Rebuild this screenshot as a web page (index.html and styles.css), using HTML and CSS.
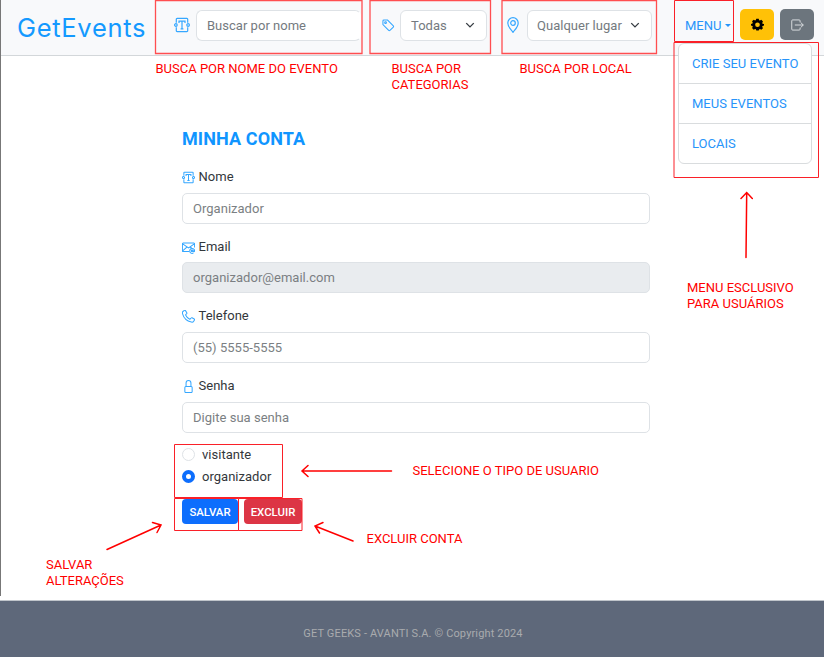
FILE: index.html
```html
<!DOCTYPE html>
<html lang="pt-BR">
<head>
<meta charset="utf-8">
<title>GetEvents - Minha conta</title>
<link rel="stylesheet" href="styles.css">
</head>
<body>
<svg class="defs" aria-hidden="true">
  <symbol id="i-name" viewBox="0 0 16 16">
    <path d="M2.3 5.8V2.2a.8.8 0 0 1 .8-.8h9.8a.8.8 0 0 1 .8.8v3.6M2.3 10.2v3.6a.8.8 0 0 0 .8.8h9.8a.8.8 0 0 0 .8-.8v-3.6M5 6V4.2h6V6M8 4.2v7.6M6.6 11.8h2.8"/>
    <circle cx="1.9" cy="8" r="1.3"/><circle cx="14.1" cy="8" r="1.3"/>
  </symbol>
  <symbol id="i-tag" viewBox="0 0 16 16">
    <path d="M2.2 3.4v4.2l6.6 6.6a1 1 0 0 0 1.4 0l3.9-3.9a1 1 0 0 0 0-1.4L7.5 2.3H3.3a1.1 1.1 0 0 0-1.1 1.1z"/><circle cx="5.2" cy="5.3" r="1"/>
  </symbol>
  <symbol id="i-pin" viewBox="0 0 16 16">
    <path d="M8 15.4C6 12.6 2.8 9.8 2.8 5.9a5.2 5.2 0 0 1 10.4 0C13.2 9.8 10 12.6 8 15.4z"/><circle cx="8" cy="6" r="2.3"/>
  </symbol>
  <symbol id="i-mail" viewBox="0 0 16 16">
    <path d="M9 13H1.4a.9.9 0 0 1-.9-.9V3.4a.9.9 0 0 1 .9-.9h13.2a.9.9 0 0 1 .9.9V8M.8 3.5 8 8.6l7.2-5.1M.8 12.3 6 7.5M10 7.4l2 1.500"/>
    <circle cx="12.5" cy="12.2" r="1.1"/><path d="M13.6 11v1.5c0 1.4 1.9 1 1.9-.5 0-3.8-6-3.8-6 .3 0 2.5 2.4 3.5 4.6 2.6"/>
  </symbol>
  <symbol id="i-phone" viewBox="0 0 16 16">
    <path d="M1.5 1.5 3 .5c.5-.3 1-.1 1.3.3l1.6 2.7c.3.5.1 1-.3 1.3l-.8.6c-.4.3-.4.7-.2 1.1.9 1.9 2.7 3.7 4.6 4.6.4.2.8.2 1.1-.2l.8-1c.3-.4.8-.5 1.3-.3l2.6 1.5c.5.3.6.9.3 1.3l-.9 1.4c-.6 1-1.7 1.4-2.9 1.1C6.3 13.7 2 9.4.6 4.4.3 3.2.6 2.1 1.5 1.5z"/>
  </symbol>
  <symbol id="i-lock" viewBox="0 0 16 16">
    <rect x="3.5" y="8" width="9" height="7.5" rx="1.3"/><path d="M5 8V3.7a3 3 0 0 1 6 0V8"/>
  </symbol>
  <symbol id="i-chev" viewBox="0 0 16 16"><path d="m2 5 6 6 6-6"/></symbol>
</svg>

<div class="page">
  <header class="navbar">
    <a class="brand">GetEvents</a>
    <div class="search search-name">
      <svg class="icon"><use href="#i-name"/></svg>
      <span class="control">Buscar por nome</span>
    </div>
    <div class="search search-cat">
      <svg class="icon small"><use href="#i-tag"/></svg>
      <span class="control">Todas<svg class="chev"><use href="#i-chev"/></svg></span>
    </div>
    <div class="search search-local">
      <svg class="icon"><use href="#i-pin"/></svg>
      <span class="control">Qualquer lugar<svg class="chev"><use href="#i-chev"/></svg></span>
    </div>
    <div class="dropdown">
      <a class="toggle">MENU<i class="caret"></i></a>
      <nav class="menu">
        <a>CRIE SEU EVENTO</a>
        <a>MEUS EVENTOS</a>
        <a>LOCAIS</a>
      </nav>
    </div>
    <button class="square yellow" aria-label="Conta">
      <svg viewBox="0 0 16 16"><path fill="#000" fill-rule="evenodd" d="M6.5 1h3l.5 1.800 1 .4 1.700-.9 2 2-.9 1.700.4 1 1.800.5v1.800l-1.800.5-.4 1 .9 1.700-2 2-1.700-.9-1 .4L9.500 15.500h-3L6 13.900l-1-.4-1.700.9-2-2 .9-1.700-.4-1L0 9.200V7.300l1.800-.5.400-1-.9-1.700 2-2 1.700.9 1-.4zM8 5.400a2.900 2.900 0 1 0 0 5.800 2.900 2.900 0 0 0 0-5.800z"/></svg>
    </button>
    <button class="square gray" aria-label="Sair">
      <svg viewBox="0 0 16 16" fill="none" stroke="#dcdfe2" stroke-width="1.100"><path d="M11.500 5V3.200a1 1 0 0 0-1-1h-7.500a1 1 0 0 0-1 1v9.600a1 1 0 0 0 1 1h7.500a1 1 0 0 0 1-1V11M5.500 8h9.700M12.300 5.200 15.200 8l-2.900 2.800"/></svg>
    </button>
  </header>

  <main class="account">
    <h1>MINHA CONTA</h1>
    <div class="field"><label><svg class="licon"><use href="#i-name"/></svg>Nome</label><div class="input">Organizador</div></div>
    <div class="field"><label><svg class="licon"><use href="#i-mail"/></svg>Email</label><div class="input disabled">organizador@email.com</div></div>
    <div class="field"><label><svg class="licon"><use href="#i-phone"/></svg>Telefone</label><div class="input">(55) 5555-5555</div></div>
    <div class="field"><label><svg class="licon"><use href="#i-lock"/></svg>Senha</label><div class="input">Digite sua senha</div></div>
    <div class="radio"><i class="dot"></i>visitante</div>
    <div class="radio"><i class="dot on"></i>organizador</div>
    <div class="actions"><button class="btn save">SALVAR</button><button class="btn delete">EXCLUIR</button></div>
  </main>

  <footer class="footer">GET GEEKS - AVANTI S.A. © Copyright 2024</footer>

  <svg class="marks" viewBox="0 0 824 657">
    <g class="soft">
      <path d="M155.500.5h206.500v53h-206.500zM370 .5h120.500v53H370zM502 .5h154.500v53H502z"/>
    </g>
    <g class="boxes">
      <path d="M674.500.5h59v41h-59zM674 42.500h144.500v135H674zM174.500 444.500h108v53h-108zM174.500 498.500h64v32h-64zM238.500 498.500h63.500v32h-63.500z"/>
    </g>
    <g class="arrows">
      <path d="M746 257.500 746.700 193M741 198.500l5.700-6 5.600 6M391.500 471H302M308 465.500l-6 5.500 6 5.500M107 549.500 161 525M152.500 522.500l8.500 2.500-4 7.500M353 541 315 526M323 522.500l-8 3.500 4.500 7"/>
    </g>
  </svg>
  <p class="note n1">BUSCA POR NOME DO EVENTO</p>
  <p class="note n2">BUSCA POR<br>CATEGORIAS</p>
  <p class="note n3">BUSCA POR LOCAL</p>
  <p class="note n4">MENU ESCLUSIVO<br>PARA USUÁRIOS</p>
  <p class="note n5">SELECIONE O TIPO DE USUARIO</p>
  <p class="note n6">EXCLUIR CONTA</p>
  <p class="note n7">SALVAR<br>ALTERAÇÕES</p>
</div>
</body>
</html>
```
FILE: styles.css
```css
* { box-sizing: border-box; }
body { margin: 0; background: #fff; font-family: Roboto, "Liberation Sans", sans-serif; font-size: 13px; letter-spacing: .02px; color: #33373b; }
.defs { position: absolute; width: 0; height: 0; }
.page { position: relative; width: 824px; height: 657px; display: flex; flex-direction: column; overflow: hidden; }
.page::before { content: ""; position: absolute; left: 0; top: 0; width: 1px; height: 596px; background: #777; z-index: 1; }

.navbar { height: 56px; flex: none; display: flex; align-items: flex-start; padding: 9px 10px 0 17px; background: #f8f9fb; border-bottom: 1px solid #d3d7da; }
.brand { width: 157px; flex: none; font-family: Inter, sans-serif; font-size: 25.5px; line-height: 37px; letter-spacing: .7px; color: #1499ff; }
.search { display: flex; flex: none; align-items: center; height: 32px; }
.search-name { width: 204px; }
.search-cat { width: 127px; }
.search-local { width: 180px; }
.icon, .licon { fill: none; stroke: #35a7ff; stroke-width: 1.2; flex: none; }
.icon { width: 16px; height: 16px; }
.icon.small { width: 14px; height: 14px; margin-left: 3px; }
.search .control { display: flex; align-items: center; justify-content: space-between; height: 31px; margin-left: 6px; padding: 0 11px 0 10px; border: 1px solid #dee2e6; border-radius: 6px; background: #fff; color: #747a80; }
.search-name .control { width: 165px; border-right-color: #fff; }
.search-cat .control { width: 87px; margin-left: 5px; }
.search-local .control { width: 125px; margin-left: 6px; padding-left: 9px; }
.chev { width: 10px; height: 10px; fill: none; stroke: #343a40; stroke-width: 2.2; }
.dropdown { position: relative; width: 55px; flex: none; }
.toggle { display: flex; align-items: center; height: 32px; color: #2794fa; }
.caret { margin-left: 3px; border: 3px solid transparent; border-top-color: #2794fa; border-bottom: 0; }
.menu { position: absolute; z-index: 2; left: -7px; top: 34px; width: 134px; height: 121px; display: flex; flex-direction: column; border: 1px solid #d9dcde; border-radius: 6px; background: #fff; }
.menu a { height: 40px; padding-left: 13px; line-height: 39px; color: #2794fa; border-bottom: 1px solid #d9dcde; }
.menu a:last-child { height: 39px; border-bottom: 0; }
.square { width: 34px; height: 31px; flex: none; padding: 0; display: flex; align-items: center; justify-content: center; border: 0; border-radius: 5px; }
.square svg { width: 13px; height: 13px; }
.yellow { background: #ffc107; margin-right: 6px; }
.gray { background: #6c757d; }
.gray svg { width: 14px; height: 14px; }

.account { width: 468px; margin-left: 182px; padding-top: 71px; flex: 1; }
h1 { margin: 0 0 14px; font-size: 18px; line-height: 24px; font-weight: 700; letter-spacing: .1px; color: #1095ff; }
.field { height: 69.8px; }
label { display: flex; align-items: center; height: 22.5px; }
.licon { width: 13px; height: 13px; margin: 2px 3.5px 0 0; stroke-width: 1.25; }
.input { height: 31px; margin-top: 5px; padding-left: 10px; line-height: 29px; border: 1px solid #dee2e6; border-radius: 5px; color: #7b7f83; }
.disabled { background: #e9ecef; }
.radio { display: flex; align-items: center; height: 21.5px; }
.dot { width: 13px; height: 13px; margin-right: 7px; border: 1px solid #dee2e6; border-radius: 50%; }
.dot.on { border: 4px solid #0d6efd; }
.actions { display: flex; gap: 6px; margin-top: 12px; }
.btn { height: 25px; padding: 0; border: 0; border-radius: 4px; font: 500 11.4px Roboto, sans-serif; color: #fff; }
.save { width: 56px; background: #0d6efd; }
.delete { width: 58px; background: #dc3545; }

.footer { height: 57px; flex: none; padding: 8px 0 0 2px; border-top: 1px solid #c0c5cb; background: #5e687a; color: #a9abae; font-size: 11px; letter-spacing: .15px; line-height: 50px; text-align: center; }

.marks { position: absolute; left: 0; top: 0; width: 824px; height: 657px; fill: none; stroke: #f00; z-index: 3; }
.soft { stroke: #ff4e50; stroke-width: 1.3; }
.boxes { stroke: #fa2028; }
.arrows { stroke-width: 1.5; stroke-linecap: round; }
.note { position: absolute; z-index: 4; margin: 0; line-height: 16px; letter-spacing: 0; color: #f00; white-space: nowrap; }
.n1 { left: 155.5px; top: 61px; }
.n2 { left: 391.5px; top: 61px; }
.n3 { left: 519.5px; top: 61px; }
.n4 { left: 687px; top: 280px; }
.n5 { left: 412.5px; top: 463px; }
.n6 { left: 366.5px; top: 531px; }
.n7 { left: 46px; top: 557px; }
```
